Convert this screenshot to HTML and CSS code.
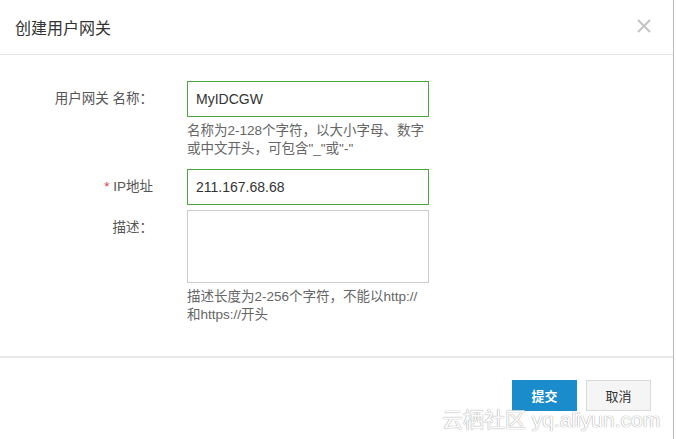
FILE: index.html
```
<!DOCTYPE html>
<html lang="zh-CN">
<head>
  <meta charset="UTF-8">
  <title>创建用户网关</title>
  <link rel="stylesheet" href="styles.css">
</head>
<body>
  <div class="dialog">
    <div class="dialog-header">
      <div class="dialog-title">创建用户网关</div>
      <svg class="close" width="16" height="16" viewBox="0 0 16 16">
        <path d="M2 2 L14 14 M14 2 L2 14" stroke="#c4c4c4" stroke-width="2" fill="none"/>
      </svg>
    </div>

    <div class="dialog-body">
      <div class="form-row">
        <div class="form-label">用户网关 名称：</div>
        <div class="form-field">
          <div class="input valid">MyIDCGW</div>
          <div class="help">名称为2-128个字符，以大小字母、数字<br>或中文开头，可包含"_"或"-"</div>
        </div>
      </div>

      <div class="form-row">
        <div class="form-label"><span class="required">*</span> IP地址</div>
        <div class="form-field">
          <div class="input valid">211.167.68.68</div>
        </div>
      </div>

      <div class="form-row">
        <div class="form-label">描述：</div>
        <div class="form-field">
          <div class="textarea"></div>
          <div class="help">描述长度为2-256个字符，不能以http://<br>和https://开头</div>
        </div>
      </div>
    </div>

    <div class="dialog-footer">
      <button class="btn btn-primary">提交</button>
      <button class="btn">取消</button>
    </div>

    <div class="watermark">云栖社区 yq.aliyun.com</div>
  </div>
</body>
</html>
```

FILE: styles.css
```
body, html {
  margin: 0;
  padding: 0;
  height: 100%;
  overflow: hidden;
  background-color: #ffffff;
  font-family: "Liberation Sans", "Noto Sans CJK SC", sans-serif;
  color: #333333;
}

.dialog {
  position: relative;
  width: 674px;
  height: 439px;
  border-right: 1px solid #b9b9b9;
  box-sizing: border-box;
}

.dialog-header {
  height: 54px;
  display: flex;
  align-items: center;
  justify-content: space-between;
  padding: 0 21px 0 15px;
  border-bottom: 1px solid #e5e5e5;
}

.dialog-title {
  font-size: 16px;
  color: #333333;
}

.close {
  margin-top: -2px;
}

.dialog-body {
  padding-top: 26px;
  height: 275px;
  border-bottom: 2px solid #e8e8e8;
}

.form-row {
  display: flex;
  margin-bottom: 5px;
}

.form-label {
  width: 153px;
  text-align: right;
  font-size: 13.5px;
  line-height: 36px;
  color: #555555;
  flex-shrink: 0;
}

.required {
  color: #e4393c;
}

.form-field {
  margin-left: 34px;
  width: 242px;
}

.input {
  height: 36px;
  box-sizing: border-box;
  border: 1px solid #cccccc;
  padding: 0 8px;
  font-size: 14px;
  line-height: 34px;
  color: #333333;
}

.input.valid {
  border-color: #4aa83c;
}

.textarea {
  height: 73px;
  box-sizing: border-box;
  border: 1px solid #cccccc;
}

.help {
  font-size: 13.5px;
  line-height: 18px;
  color: #666666;
  margin-top: 5px;
  margin-bottom: 6px;
  white-space: nowrap;
}

.dialog-footer {
  display: flex;
  justify-content: flex-end;
  gap: 9px;
  padding: 22px 22px 0 0;
}

.btn {
  height: 31px;
  min-width: 65px;
  padding: 0 16px;
  font-family: "Liberation Sans", "Noto Sans CJK SC", sans-serif;
  font-size: 13px;
  color: #333333;
  background-color: #f5f5f5;
  border: 1px solid #d9d9d9;
  cursor: pointer;
}

.btn-primary {
  background-color: #1a8bcb;
  border-color: #1a8bcb;
  color: #ffffff;
  font-weight: bold;
}

.watermark {
  position: absolute;
  left: 442px;
  top: 403px;
  font-size: 21px;
  color: #ffffff;
  text-shadow: 0 0 1px #9a9a9a, 0 0 1px #9a9a9a;
  white-space: nowrap;
  opacity: 0.9;
}
```
